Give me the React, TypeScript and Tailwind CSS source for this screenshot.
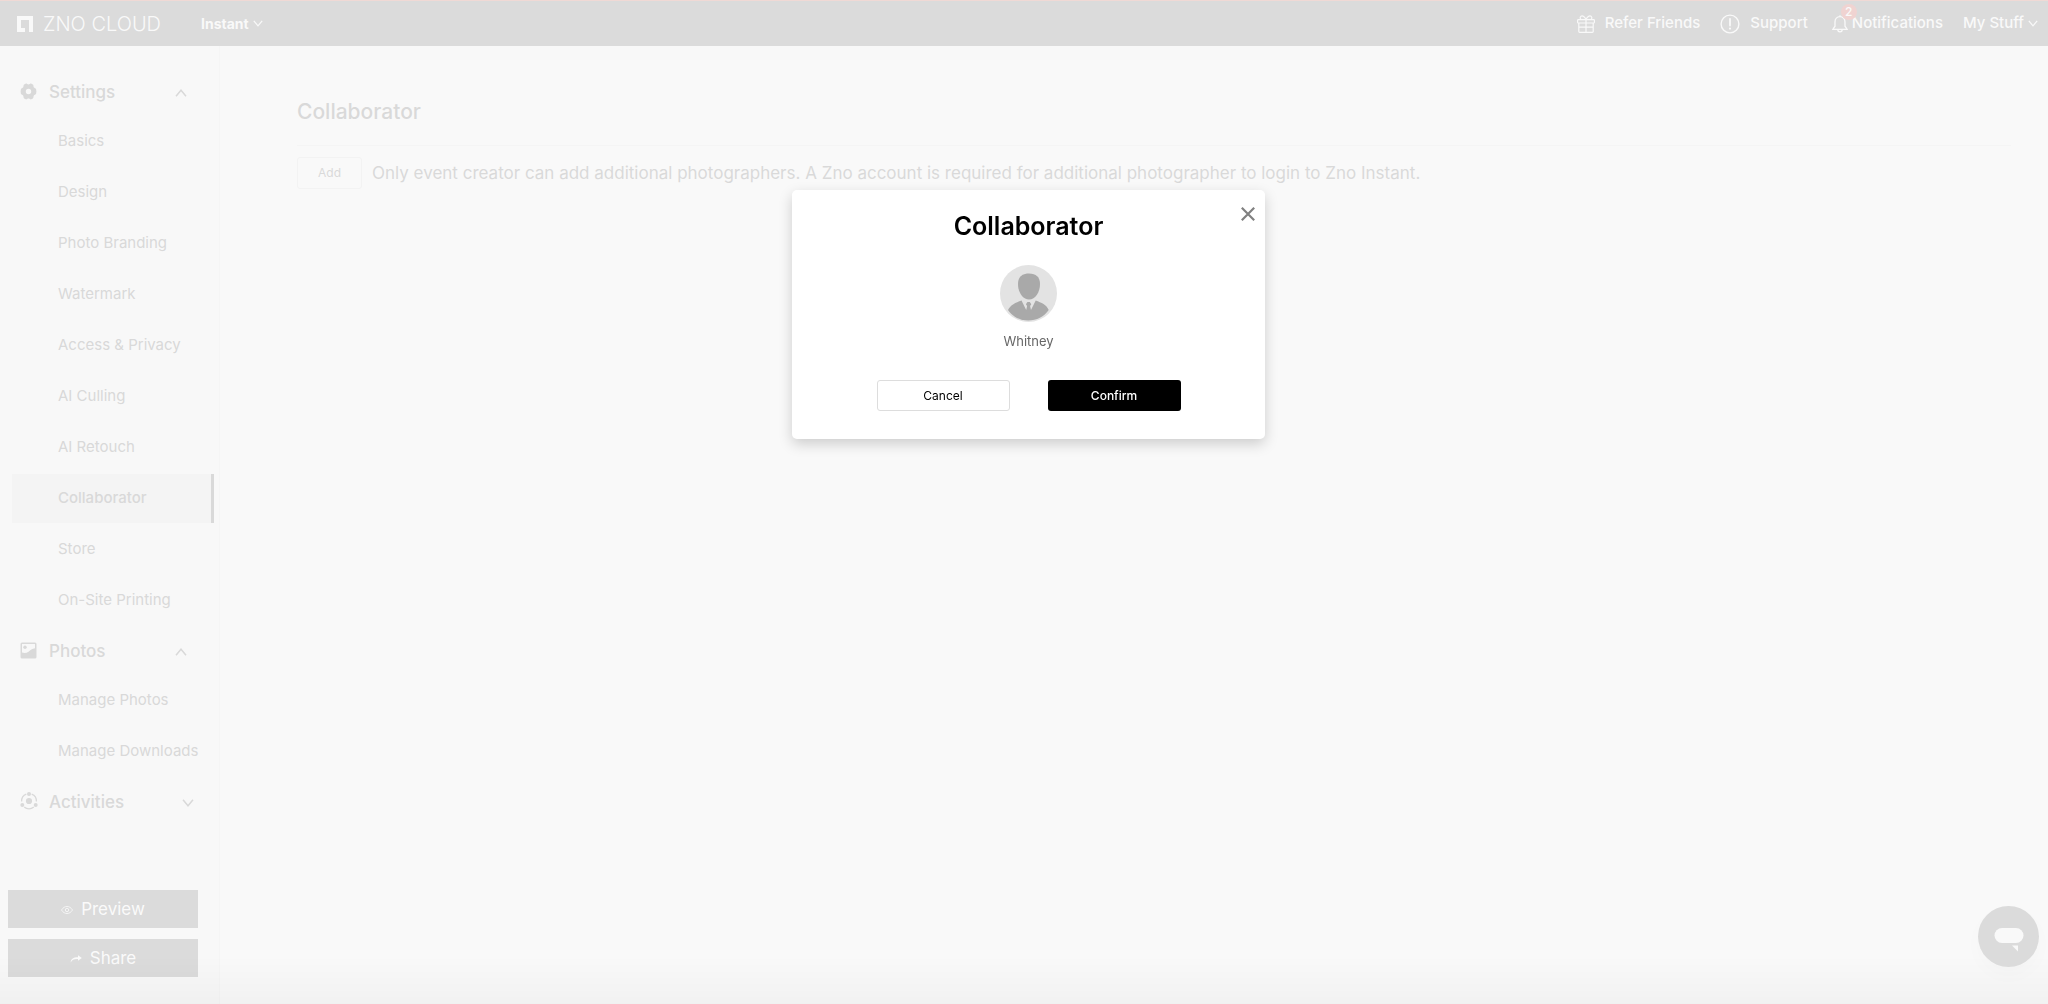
import { useState } from "react";

const settingsItems = [
  "Basics",
  "Design",
  "Photo Branding",
  "Watermark",
  "Access & Privacy",
  "AI Culling",
  "AI Retouch",
  "Collaborator",
  "Store",
  "On-Site Printing",
];

const photoItems = ["Manage Photos", "Manage Downloads"];

function Chevron({ up = false, className = "" }: { up?: boolean; className?: string }) {
  return (
    <svg viewBox="0 0 12 8" fill="none" stroke="currentColor" className={className} aria-hidden="true">
      <path d={up ? "M1 7.2 6 1.2l5 6" : "M1 .8 6 6.8l5-6"} />
    </svg>
  );
}

function GearIcon() {
  return (
    <svg viewBox="0 0 17 17" className="size-[17px]" fill="currentColor" aria-hidden="true">
      <path
        fillRule="evenodd"
        d="M5.6.7c1-.4 1.7.7 2.9.7S10.4.3 11.4.7l1.5.9c.9.7.3 1.7.9 2.7s1.9.9 2.3 1.9c.4 1.5.4 3.1 0 4.6-.4 1-1.7.9-2.3 1.9s0 2-.9 2.7l-1.5.9c-1 .4-1.7-.7-2.9-.7s-1.9 1.1-2.9.7l-1.5-.9c-.9-.7-.3-1.7-.9-2.7s-1.9-.9-2.3-1.9C.5 9.3.5 7.7.9 6.2c.4-1 1.7-.9 2.3-1.9s0-2 .9-2.7zM8.5 5.8a2.7 2.7 0 1 0 0 5.4 2.7 2.7 0 0 0 0-5.4z"
      />
    </svg>
  );
}

function PhotoIcon() {
  return (
    <svg viewBox="0 0 17 17" className="size-[17px]" fill="currentColor" aria-hidden="true">
      <path
        fillRule="evenodd"
        d="M2 .5h13A1.5 1.5 0 0 1 16.5 2v13a1.5 1.5 0 0 1-1.5 1.5H2A1.5 1.5 0 0 1 .5 15V2A1.5 1.5 0 0 1 2 .5zM2 2v8.5c2.5.8 4.5.6 6.5-.8C10.5 8.2 12 6.4 15 6.2V2z"
      />
      <circle cx="5" cy="5.2" r="1.7" />
    </svg>
  );
}

function ActivityIcon() {
  return (
    <svg viewBox="0 0 18 18" className="size-[18px]" fill="currentColor" aria-hidden="true">
      <g fill="none" stroke="currentColor" strokeWidth="1.3">
        <path d="M6.3 2.2A7.5 7.5 0 0 0 1.6 9.5" />
        <path d="M11.7 2.2a7.5 7.5 0 0 1 4.7 7.3" />
        <path d="M4.2 15a7.5 7.5 0 0 0 9.6 0" />
      </g>
      <circle cx="9" cy="9" r="3.1" />
      <circle cx="9" cy="2" r="2" />
      <circle cx="2.3" cy="13" r="2" />
      <circle cx="15.7" cy="13" r="2" />
    </svg>
  );
}

function GiftIcon() {
  return (
    <svg viewBox="0 0 18 18" className="size-[18px]" fill="none" stroke="currentColor" strokeWidth="1.2" aria-hidden="true">
      <rect x=".6" y="4.6" width="16.8" height="3.4" rx=".8" />
      <path d="M1.8 8v8.6a.8.8 0 0 0 .8.8h12.8a.8.8 0 0 0 .8-.8V8M9 4.6v12.8M1.8 12.2h14.4" />
      <path d="M9 4.6C8 1.8 5.5.2 4 1.2 2.6 2.3 3.2 4 4.2 4.6M9 4.6c1-2.8 3.5-4.4 5-3.4 1.4 1.1.8 2.8-.2 3.4" />
    </svg>
  );
}

function SupportIcon() {
  return (
    <svg viewBox="0 0 20 20" className="size-5" fill="none" stroke="currentColor" strokeWidth="1.4" aria-hidden="true">
      <circle cx="10" cy="10" r="8.9" />
      <path d="M10 4.8v6.7" strokeWidth="1.8" strokeLinecap="round" />
      <circle cx="10" cy="14.6" r="1.1" fill="currentColor" stroke="none" />
    </svg>
  );
}

function BellIcon() {
  return (
    <svg viewBox="0 0 16 18" className="h-[18px] w-4" fill="none" stroke="currentColor" strokeWidth="1.3" aria-hidden="true">
      <path d="M8 1.6c-3 0-5 2.3-5 5.2v4.4L.8 14.4h14.4L13 11.2V6.8c0-2.9-2-5.2-5-5.2zM8 1.6V.3M5.8 14.6a2.2 2.2 0 0 0 4.4 0" />
    </svg>
  );
}

function Avatar() {
  return (
    <svg viewBox="0 0 57 57" className="size-[57px]" role="img" aria-label="Whitney">
      <circle cx="28.5" cy="28.5" r="28.5" fill="#e3e3e3" />
      <path
        fill="#a9a9a9"
        d="M29 8.5c7 0 11 3.5 11 10.5 0 8-4.5 15.5-11 15.5S18 27 18 19C18 12 22 8.5 29 8.5z"
      />
      <path
        fill="#a9a9a9"
        d="M21.5 35.5 26.2 45l.9-4-1.2-1.7 1.5-2.3h2.4l1.5 2.3-1.2 1.7.9 4 4.7-9.5c5.8 2.3 10.8 4.2 13 9.5-4.5 6.5-12 10.5-20.5 10.5S12.5 51.5 8 45c2.5-5 7.5-7.5 13.5-9.5z"
      />
    </svg>
  );
}

function TopBar() {
  return (
    <header className="flex h-[46px] items-center border-t border-[#f0d9d5] bg-[#dbdbdb] pr-[10px] pl-[17px] text-[15px] font-medium text-[#f9f9f9]">
      <a href="#" className="flex w-[184px] items-center gap-[10px]">
        <svg viewBox="0 0 16 16" className="size-4" fill="currentColor" aria-hidden="true">
          <path d="M0 0h16v16h-4V4H4v8h4v4H0z" />
        </svg>
        <span className="text-xl font-light">ZNO CLOUD</span>
      </a>
      <button className="flex items-center gap-1 text-sm font-bold">
        Instant
        <Chevron className="h-[7px] w-[10px] stroke-[1.5]" />
      </button>
      <nav className="ml-auto flex items-center">
        <a href="#" className="mr-5 flex items-center gap-[10px]">
          <GiftIcon />
          Refer Friends
        </a>
        <a href="#" className="mr-6 flex items-center gap-[10px]">
          <SupportIcon />
          Support
        </a>
        <a href="#" className="relative mr-5 flex items-center gap-1">
          <BellIcon />
          <span className="absolute -top-2 left-[9px] flex size-4 items-center justify-center rounded-full bg-[#f0d3d1] text-xs">
            2
          </span>
          Notifications
        </a>
        <button className="flex items-center gap-1">
          My Stuff
          <Chevron className="h-[7px] w-[10px] stroke-[1.5]" />
        </button>
      </nav>
    </header>
  );
}

function SectionHeading({ icon, label, open }: { icon: React.ReactNode; label: string; open: boolean }) {
  return (
    <button
      aria-expanded={open}
      className={`mb-[2px] flex h-[46px] w-full items-center pt-[2px] pl-5 text-[17px] font-medium ${
        open ? "pr-8" : "pr-[25px]"
      }`}
    >
      <span className="w-[29px] pb-1">{icon}</span>
      {label}
      <Chevron up={open} className="ml-auto h-[8px] w-[12px] stroke-[1.5]" />
    </button>
  );
}

function SectionItems({ items, active }: { items: string[]; active?: string }) {
  return (
    <ul className="mb-[3px] flex flex-col gap-[2px] pr-[5px] pl-3">
      {items.map((item) => (
        <li key={item}>
          <a
            href="#"
            className={`flex h-[49px] items-center border-r-[3px] pl-[46px] text-[15px] ${
              item === active ? "border-[#d9d9d9] bg-[#f4f4f4] font-medium" : "border-transparent"
            }`}
          >
            {item}
          </a>
        </li>
      ))}
    </ul>
  );
}

function Sidebar() {
  return (
    <aside className="flex w-[220px] shrink-0 flex-col border-r border-[#f5f5f5] bg-[#f8f8f8] pt-[23px] pb-[27px] text-[#d9d9d9]">
      <SectionHeading icon={<GearIcon />} label="Settings" open />
      <SectionItems items={settingsItems} active="Collaborator" />
      <SectionHeading icon={<PhotoIcon />} label="Photos" open />
      <SectionItems items={photoItems} />
      <SectionHeading icon={<ActivityIcon />} label="Activities" open={false} />

      <div className="mt-auto flex flex-col gap-[11px] pr-[21px] pl-2 text-[17px] text-[#fafafa]">
        <button className="flex h-[38px] items-center justify-center gap-2 bg-[#dbdbdb] pt-[2px]">
          <svg viewBox="0 0 12 8" className="h-2 w-3" fill="none" stroke="currentColor" strokeWidth=".8" aria-hidden="true">
            <path d="M.5 4C2 1.6 3.9.5 6 .5s4 1.1 5.5 3.5C10 6.4 8.1 7.5 6 7.5S2 6.4.5 4z" />
            <circle cx="6" cy="4" r="1.7" />
          </svg>
          Preview
        </button>
        <button className="flex h-[38px] items-center justify-center gap-2 bg-[#dbdbdb] pt-[2px]">
          <svg viewBox="0 0 12 8" className="h-2 w-3" fill="currentColor" aria-hidden="true">
            <path d="M8 .3 11.8 3 8 5.8V4C4.5 3.8 2 4.6.8 7.5.4 4.2 3.2 2.2 8 2.2z" />
          </svg>
          Share
        </button>
      </div>
    </aside>
  );
}

function CollaboratorDialog({ onClose }: { onClose: () => void }) {
  return (
    <div className="fixed inset-0 flex items-start justify-center pt-[190px] pl-[9px]">
      <div
        role="dialog"
        aria-modal="true"
        aria-labelledby="dialog-title"
        className="relative flex w-[473px] flex-col items-center rounded-[5px] bg-white pt-[18px] pb-7 shadow-[0_5px_14px_rgba(0,0,0,0.18)]"
      >
        <button onClick={onClose} aria-label="Close" className="absolute top-[17px] right-[10px] text-[#808080]">
          <svg viewBox="0 0 14 14" className="size-[14px]" stroke="currentColor" strokeWidth="2.2" aria-hidden="true">
            <path d="M.8.8l12.4 12.4M13.2.8.8 13.2" />
          </svg>
        </button>
        <h2 id="dialog-title" className="mb-[21px] text-[25px] leading-9 font-semibold text-black">
          Collaborator
        </h2>
        <Avatar />
        <p className="mt-[9px] mb-[29px] text-[13px] leading-5 text-[#666]">Whitney</p>
        <div className="flex gap-[38px] text-xs">
          <button onClick={onClose} className="h-[31px] w-[133px] rounded-[3px] border border-[#ddd] bg-white text-black">
            Cancel
          </button>
          <button onClick={onClose} className="h-[31px] w-[133px] rounded-[3px] bg-black font-medium text-white">
            Confirm
          </button>
        </div>
      </div>
    </div>
  );
}

export default function App() {
  const [dialogOpen, setDialogOpen] = useState(true);

  return (
    <div className="flex min-h-screen flex-col bg-[#f8f8f8] font-['Inter',sans-serif]">
      <TopBar />
      <div className="flex flex-1">
        <Sidebar />
        <main className="mt-[14px] flex-1 bg-[#f9f9f9] pt-[34px] pr-[37px] pl-[77px] text-[#d9d9d9]">
          <h1 className="border-b border-[#f5f5f5] pb-[15px] text-[21px] leading-9 font-medium">Collaborator</h1>
          <div className="mt-[11px] flex items-center gap-[10px]">
            <button
              onClick={() => setDialogOpen(true)}
              className="h-8 w-[65px] shrink-0 rounded-[3px] border border-[#f3f3f3] text-xs"
            >
              Add
            </button>
            <p className="pt-[2px] text-[17px]">
              Only event creator can add additional photographers. A Zno account is required for additional
              photographer to login to Zno Instant.
            </p>
          </div>
        </main>
      </div>

      <div className="pointer-events-none fixed inset-x-0 bottom-0 h-12 bg-linear-to-t from-black/3 to-transparent" />

      <button
        aria-label="Open chat"
        className="fixed right-[9px] bottom-[37px] flex size-[61px] items-center justify-center rounded-full bg-[#dbdbdb] pt-1.5 shadow-[0_8px_20px_rgba(0,0,0,0.02)]"
      >
        <svg viewBox="0 0 30 24" className="h-6 w-[30px]" fill="#f9f9f9" aria-hidden="true">
          <rect x=".5" width="29" height="15" rx="7.5" />
          <path d="M18 17.5h6v6z" />
        </svg>
      </button>

      {dialogOpen && <CollaboratorDialog onClose={() => setDialogOpen(false)} />}
    </div>
  );
}
